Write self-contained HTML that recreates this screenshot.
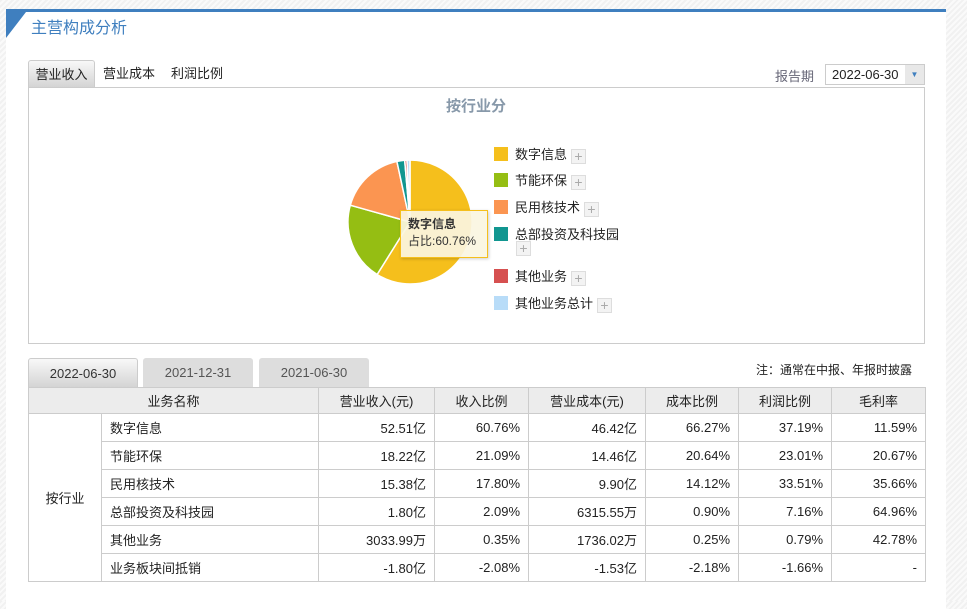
<!DOCTYPE html>
<html><head><meta charset="utf-8"><style>
*{margin:0;padding:0;box-sizing:border-box}
body{width:967px;height:601px;overflow:hidden;font-family:"Liberation Sans","Noto Sans CJK SC",sans-serif;font-size:13px;color:#222;
background:repeating-linear-gradient(135deg,#f1f1f1 0 2px,#fafafa 2px 4px);position:relative}
.panel{position:absolute;left:6px;top:9px;width:940px;height:600px;background:#fff;border-top:3px solid #3f7fbf}
.corner{position:absolute;left:6px;top:12px;width:0;height:0;border-top:26px solid #3f7fbf;border-right:20px solid transparent}
.title{position:absolute;left:31px;top:14px;font-size:16px;color:#3f7fbf}
.abs{position:absolute}
.tab{position:absolute;top:60px;height:27px;line-height:27px;text-align:center;font-size:13px}
.box{position:absolute;left:28px;top:87px;width:897px;height:257px;border:1px solid #ccc}
.leg{position:absolute;left:494px;font-size:13px}
.leg i{display:inline-block;width:14px;height:14px;vertical-align:-2px;margin-right:7px}
.plus{display:inline-block;width:15px;height:15px;border:1px solid #ddd;background:#f3f3f3;color:#aaa;font-size:14px;line-height:13px;text-align:center;vertical-align:-2px;margin-left:4px}
.dt{position:absolute;top:358px;height:29px;line-height:29px;text-align:center;font-size:13px;background:#ddd;color:#555;border-radius:3px 3px 0 0;width:110px}
table{position:absolute;left:28px;top:387px;border-collapse:collapse;width:897px;table-layout:fixed}
td,th{border:1px solid #ccc;height:28px;font-weight:normal;font-size:13px;padding:0 8px;white-space:nowrap}
th{background:#ececec;height:26px}
td.r{text-align:right}
</style></head><body>
<div class="panel"></div>
<div class="corner"></div>
<div class="title">主营构成分析</div>
<div class="tab" style="left:28px;width:67px;background:linear-gradient(#f8f8f8,#d4d4d4);border:1px solid #ccc;border-bottom:none;border-radius:3px 3px 0 0">营业收入</div>
<div class="tab" style="left:97px;width:64px">营业成本</div>
<div class="tab" style="left:165px;width:64px">利润比例</div>
<div class="abs" style="left:775px;top:66px;color:#667;font-size:13px">报告期</div>
<div class="abs" style="left:825px;top:64px;width:100px;height:21px;border:1px solid #ccc;line-height:19px;padding-left:6px;font-size:13px">2022-06-30<span style="position:absolute;right:0;top:0;width:19px;height:19px;background:#e8e8e8;color:#3f7fbf;font-size:8px;text-align:center">▼</span></div>
<div class="box"></div>
<div class="abs" style="left:446px;top:95px;font-size:15px;font-weight:bold;color:#8899aa">按行业分</div>
<svg class="abs" style="left:0;top:0" width="967" height="601">
<g stroke="#fff" stroke-width="1.5">
<path d="M410,222 L410,160 A62,62 0 1 1 377.1,274.5 Z" fill="#f5bf1c"/>
<path d="M410,222 L377.1,274.5 A62,62 0 0 1 350.3,205.2 Z" fill="#95be13"/>
<path d="M410,222 L350.3,205.2 A62,62 0 0 1 396.9,161.4 Z" fill="#fb9551"/>
<path d="M410,222 L396.9,161.4 A62,62 0 0 1 404.7,160.2 Z" fill="#119690"/>
<path d="M410,222 L404.7,160.2 A62,62 0 0 1 407,160.1 Z" fill="#d65050"/>
<path d="M410,222 L407,160.1 A62,62 0 0 1 410,160 Z" fill="#b8dcf8"/>
</g>
</svg>
<div class="abs" style="left:400px;top:210px;width:88px;height:48px;background:rgba(250,245,225,.92);border:1px solid #f5bf1c;padding:5px 7px;font-size:12px;line-height:17px;color:#333;box-shadow:1px 1px 3px rgba(0,0,0,.2)"><b>数字信息</b><br>占比:60.76%</div>
<div class="leg" style="top:144px"><i style="background:#f5bf1c"></i>数字信息<span class="plus">+</span></div>
<div class="leg" style="top:170px"><i style="background:#95be13"></i>节能环保<span class="plus">+</span></div>
<div class="leg" style="top:197px"><i style="background:#fb9551"></i>民用核技术<span class="plus">+</span></div>
<div class="leg" style="top:224px"><i style="background:#119690"></i>总部投资及科技园</div>
<div class="leg" style="top:239px;left:516px"><span class="plus" style="margin:0">+</span></div>
<div class="leg" style="top:266px"><i style="background:#d65050"></i>其他业务<span class="plus">+</span></div>
<div class="leg" style="top:293px"><i style="background:#b8dcf8"></i>其他业务总计<span class="plus">+</span></div>
<div class="dt" style="left:28px;background:linear-gradient(#f8f8f8,#d4d4d4);color:#333;border:1px solid #ccc;border-bottom:none">2022-06-30</div>
<div class="dt" style="left:143px">2021-12-31</div>
<div class="dt" style="left:259px">2021-06-30</div>
<div class="abs" style="left:756px;top:361px;font-size:12px">注：通常在中报、年报时披露</div>
<table>
<colgroup><col style="width:73px"><col style="width:217px"><col style="width:116px"><col style="width:94px"><col style="width:117px"><col style="width:93px"><col style="width:93px"><col style="width:94px"></colgroup>
<tr><th colspan="2">业务名称</th><th>营业收入(元)</th><th>收入比例</th><th>营业成本(元)</th><th>成本比例</th><th>利润比例</th><th>毛利率</th></tr>
<tr><td rowspan="6" style="text-align:center">按行业</td><td>数字信息</td><td class="r">52.51亿</td><td class="r">60.76%</td><td class="r">46.42亿</td><td class="r">66.27%</td><td class="r">37.19%</td><td class="r">11.59%</td></tr>
<tr><td>节能环保</td><td class="r">18.22亿</td><td class="r">21.09%</td><td class="r">14.46亿</td><td class="r">20.64%</td><td class="r">23.01%</td><td class="r">20.67%</td></tr>
<tr><td>民用核技术</td><td class="r">15.38亿</td><td class="r">17.80%</td><td class="r">9.90亿</td><td class="r">14.12%</td><td class="r">33.51%</td><td class="r">35.66%</td></tr>
<tr><td>总部投资及科技园</td><td class="r">1.80亿</td><td class="r">2.09%</td><td class="r">6315.55万</td><td class="r">0.90%</td><td class="r">7.16%</td><td class="r">64.96%</td></tr>
<tr><td>其他业务</td><td class="r">3033.99万</td><td class="r">0.35%</td><td class="r">1736.02万</td><td class="r">0.25%</td><td class="r">0.79%</td><td class="r">42.78%</td></tr>
<tr><td>业务板块间抵销</td><td class="r">-1.80亿</td><td class="r">-2.08%</td><td class="r">-1.53亿</td><td class="r">-2.18%</td><td class="r">-1.66%</td><td class="r">-</td></tr>
</table>
</body></html>
